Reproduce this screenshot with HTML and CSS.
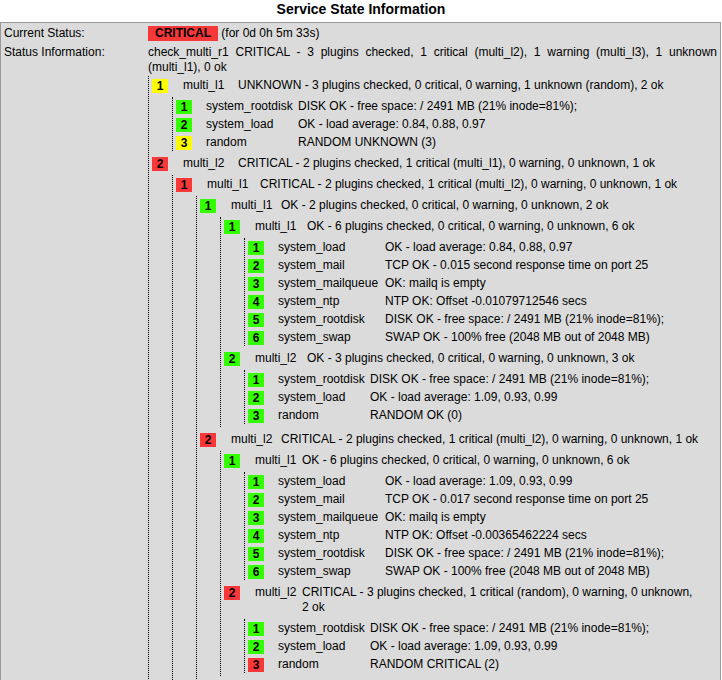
FILE: index.html
```html
<!DOCTYPE html>
<html>
<head>
<meta charset="utf-8">
<title>Service State Information</title>
<link rel="stylesheet" href="styles.css">
</head>
<body>
<div class="title">Service State Information</div>
<div class="info">
  <div class="label">Current Status:</div>
  <div class="value"><span class="state-badge">CRITICAL</span> (for 0d 0h 5m 33s)</div>
  <div class="label">Status Information:</div>
  <div class="value">
    <div class="text">check_multi_r1 CRITICAL - 3 plugins checked, 1 critical (multi_l2), 1 warning (multi_l3), 1 unknown (multi_l1), 0 ok</div>
    <div class="group tree n55">
      <div class="row"><span class="b unknown">1</span><span class="name">multi_l1</span><span class="out">UNKNOWN - 3 plugins checked, 0 critical, 0 warning, 1 unknown (random), 2 ok</span></div>
      <div class="group leaf n92">
        <div class="row"><span class="b ok">1</span><span class="name">system_rootdisk</span><span class="out">DISK OK - free space: / 2491 MB (21% inode=81%);</span></div>
        <div class="row"><span class="b ok">2</span><span class="name">system_load</span><span class="out">OK - load average: 0.84, 0.88, 0.97</span></div>
        <div class="row"><span class="b unknown">3</span><span class="name">random</span><span class="out">RANDOM UNKNOWN (3)</span></div>
      </div>
      <div class="row"><span class="b crit">2</span><span class="name">multi_l2</span><span class="out">CRITICAL - 2 plugins checked, 1 critical (multi_l1), 0 warning, 0 unknown, 1 ok</span></div>
      <div class="group n53">
        <div class="row"><span class="b crit">1</span><span class="name">multi_l1</span><span class="out">CRITICAL - 2 plugins checked, 1 critical (multi_l2), 0 warning, 0 unknown, 1 ok</span></div>
        <div class="group n50">
          <div class="row"><span class="b ok">1</span><span class="name">multi_l1</span><span class="out">OK - 2 plugins checked, 0 critical, 0 warning, 0 unknown, 2 ok</span></div>
          <div class="group n52">
            <div class="row"><span class="b ok">1</span><span class="name">multi_l1</span><span class="out">OK - 6 plugins checked, 0 critical, 0 warning, 0 unknown, 6 ok</span></div>
            <div class="group leaf n107">
              <div class="row"><span class="b ok">1</span><span class="name">system_load</span><span class="out">OK - load average: 0.84, 0.88, 0.97</span></div>
              <div class="row"><span class="b ok">2</span><span class="name">system_mail</span><span class="out">TCP OK - 0.015 second response time on port 25</span></div>
              <div class="row"><span class="b ok">3</span><span class="name">system_mailqueue</span><span class="out">OK: mailq is empty</span></div>
              <div class="row"><span class="b ok">4</span><span class="name">system_ntp</span><span class="out">NTP OK: Offset -0.01079712546 secs</span></div>
              <div class="row"><span class="b ok">5</span><span class="name">system_rootdisk</span><span class="out">DISK OK - free space: / 2491 MB (21% inode=81%);</span></div>
              <div class="row"><span class="b ok">6</span><span class="name">system_swap</span><span class="out">SWAP OK - 100% free (2048 MB out of 2048 MB)</span></div>
            </div>
            <div class="row"><span class="b ok">2</span><span class="name">multi_l2</span><span class="out">OK - 3 plugins checked, 0 critical, 0 warning, 0 unknown, 3 ok</span></div>
            <div class="group leaf n92">
              <div class="row"><span class="b ok">1</span><span class="name">system_rootdisk</span><span class="out">DISK OK - free space: / 2491 MB (21% inode=81%);</span></div>
              <div class="row"><span class="b ok">2</span><span class="name">system_load</span><span class="out">OK - load average: 1.09, 0.93, 0.99</span></div>
              <div class="row"><span class="b ok">3</span><span class="name">random</span><span class="out">RANDOM OK (0)</span></div>
            </div>
          </div>
          <div class="row"><span class="b crit">2</span><span class="name">multi_l2</span><span class="out">CRITICAL - 2 plugins checked, 1 critical (multi_l2), 0 warning, 0 unknown, 1 ok</span></div>
          <div class="group n47">
            <div class="row"><span class="b ok">1</span><span class="name">multi_l1</span><span class="out">OK - 6 plugins checked, 0 critical, 0 warning, 0 unknown, 6 ok</span></div>
            <div class="group leaf n107">
              <div class="row"><span class="b ok">1</span><span class="name">system_load</span><span class="out">OK - load average: 1.09, 0.93, 0.99</span></div>
              <div class="row"><span class="b ok">2</span><span class="name">system_mail</span><span class="out">TCP OK - 0.017 second response time on port 25</span></div>
              <div class="row"><span class="b ok">3</span><span class="name">system_mailqueue</span><span class="out">OK: mailq is empty</span></div>
              <div class="row"><span class="b ok">4</span><span class="name">system_ntp</span><span class="out">NTP OK: Offset -0.00365462224 secs</span></div>
              <div class="row"><span class="b ok">5</span><span class="name">system_rootdisk</span><span class="out">DISK OK - free space: / 2491 MB (21% inode=81%);</span></div>
              <div class="row"><span class="b ok">6</span><span class="name">system_swap</span><span class="out">SWAP OK - 100% free (2048 MB out of 2048 MB)</span></div>
            </div>
            <div class="row"><span class="b crit">2</span><span class="name">multi_l2</span><span class="out">CRITICAL - 3 plugins checked, 1 critical (random), 0 warning, 0 unknown,<br>2 ok</span></div>
            <div class="group leaf n92">
              <div class="row"><span class="b ok">1</span><span class="name">system_rootdisk</span><span class="out">DISK OK - free space: / 2491 MB (21% inode=81%);</span></div>
              <div class="row"><span class="b ok">2</span><span class="name">system_load</span><span class="out">OK - load average: 1.09, 0.93, 0.99</span></div>
              <div class="row"><span class="b crit">3</span><span class="name">random</span><span class="out">RANDOM CRITICAL (2)</span></div>
            </div>
          </div>
        </div>
      </div>
    </div>
  </div>
</div>
</body>
</html>
```
FILE: styles.css
```css
* { box-sizing: border-box; }

body {
  margin: 0;
  font-family: "Liberation Sans", Arial, sans-serif;
  font-size: 12px;
  color: #000;
  background: #fff;
}

.title {
  height: 22px;
  font-size: 14px;
  font-weight: bold;
  line-height: 18px;
  text-align: center;
}

.info {
  margin-right: 1px;
  border: 1px solid #999;
  background: #dbdbdb;
  padding: 3px 3px 0 3px;
  display: grid;
  grid-template-columns: 144px 1fr;
  row-gap: 4px;
  line-height: 15px;
}

.text {
  text-align: justify;
}

.state-badge {
  display: inline-block;
  width: 70px;
  height: 15px;
  line-height: 15px;
  padding-left: 7px;
  background: #f83838;
  font-weight: bold;
}

.group {
  display: flow-root;
  border-left: 1px dotted #000;
  padding-left: 3px;
  margin: 3px 0 3px 20px;
}

.group.tree {
  margin: 1px 0 3px 0;
}

.row {
  display: flex;
  align-items: flex-start;
  padding: 2px 0 1px;
  line-height: 15px;
}

.b {
  flex: none;
  width: 16px;
  height: 14px;
  line-height: 14px;
  margin-top: 1px;
  margin-right: 15px;
  text-align: center;
  font-weight: bold;
}

.leaf > .row > .b { margin-right: 14px; }

.b.ok { background: #33ff00; }
.b.crit { background: #f83838; }
.b.unknown { background: #ffff00; }

.name { flex: none; white-space: nowrap; }
.out { flex: 1; }

.n47 > .row > .name { width: 47px; }
.n50 > .row > .name { width: 50px; }
.n52 > .row > .name { width: 52px; }
.n53 > .row > .name { width: 53px; }
.n55 > .row > .name { width: 55px; }
.n92 > .row > .name { width: 92px; }
.n107 > .row > .name { width: 107px; }
```
